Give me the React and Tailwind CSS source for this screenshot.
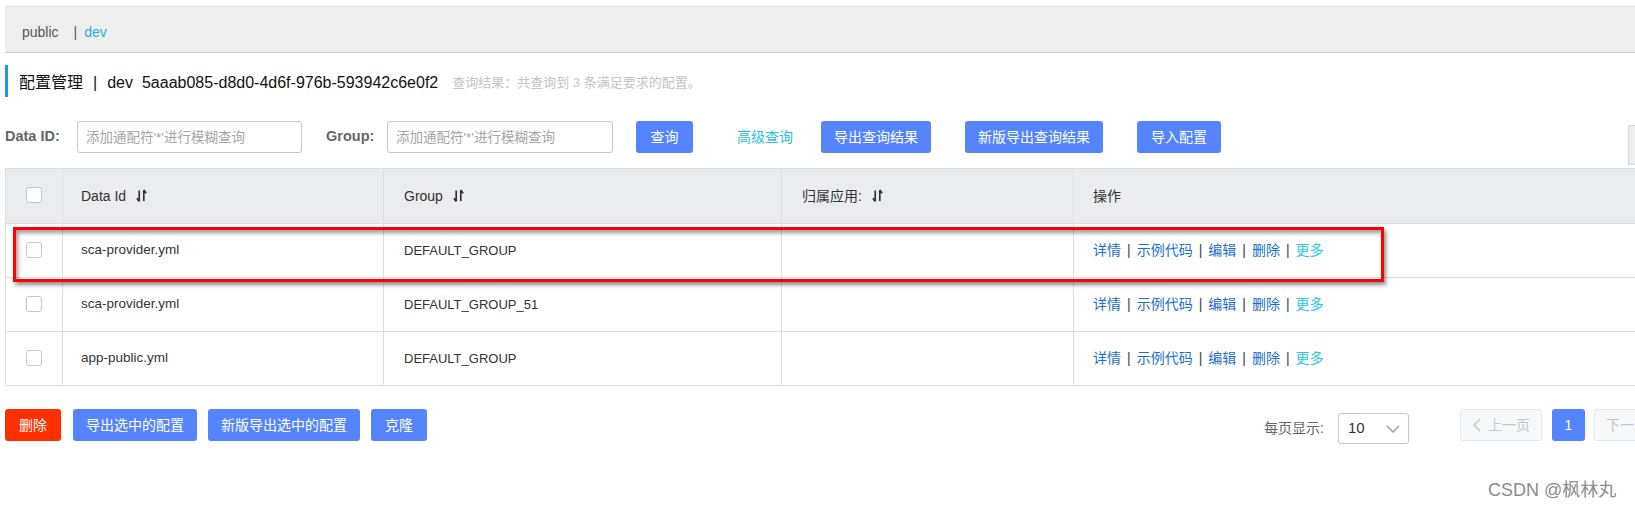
import React from 'react'

const rows = [
  { id: 'sca-provider.yml', group: 'DEFAULT_GROUP' },
  { id: 'sca-provider.yml', group: 'DEFAULT_GROUP_51' },
  { id: 'app-public.yml', group: 'DEFAULT_GROUP' },
]

function SortIcon() {
  return (
    <svg width="11" height="14" viewBox="0 0 11 14" className="ml-[10px] shrink-0" fill="none" stroke="#333" strokeWidth="1.7">
      <path d="M3.2 1.5v11M3.2 12.5L0.9 9.2" />
      <path d="M7.8 1v11M7.8 1l2.3 3.3" />
    </svg>
  )
}

function Checkbox() {
  return <span className="block w-[16px] h-[16px] -mt-[2px] rounded-[3px] border border-[#c4c6cf] bg-white" />
}

function Actions() {
  const sep = <span className="px-[6px] text-[#444]">|</span>
  return (
    <div className="flex items-center text-[14px] text-[#1e6fd0]">
      <span>详情</span>
      {sep}
      <span>示例代码</span>
      {sep}
      <span>编辑</span>
      {sep}
      <span>删除</span>
      {sep}
      <span className="text-[#2fc6e3]">更多</span>
    </div>
  )
}

function Btn({ w, children, red }) {
  return (
    <div
      className={`${w} h-[32px] shrink-0 rounded-[3px] flex items-center justify-center text-[14px] text-white ${
        red ? 'bg-[#ff3000]' : 'bg-[#5584ff]'
      }`}
    >
      {children}
    </div>
  )
}

export default function App() {
  return (
    <div className="relative w-[1635px] h-[511px] overflow-hidden bg-white text-[#333] font-['Liberation_Sans','Noto_Sans_CJK_SC',sans-serif]">
      <div className="w-[1680px] pl-[5px] pt-[5px]">
        {/* namespace bar */}
        <div className="h-[48px] bg-[#eeeeee] border-b border-[#cccccc] flex items-center pt-[7px] pl-[17px] text-[14px]">
          <span className="text-[#555]">public</span>
          <span className="ml-[15px] text-[#555]">|</span>
          <span className="ml-[7px] text-[#1cb4d8]">dev</span>
        </div>

        {/* title */}
        <div className="mt-[12px] h-[32px] border-l-[3px] border-[#1a9bd7] flex items-center pt-[4px] pl-[11px] text-[16px] text-[#111]">
          <span>配置管理</span>
          <span className="mx-[10px]">|</span>
          <span>dev</span>
          <span className="ml-[9px]">5aaab085-d8d0-4d6f-976b-593942c6e0f2</span>
          <span className="ml-[14px] text-[13px] text-[#c4c4c4]">查询结果：共查询到 3 条满足要求的配置。</span>
        </div>

        {/* search row */}
        <div className="mt-[24px] h-[32px] flex items-center">
          <span className="w-[58px] shrink-0 font-bold text-[14.5px] text-[#666]">Data ID:</span>
          <input
            className="ml-[14px] w-[225px] h-[32px] shrink-0 rounded-[3px] border border-[#c4c6cf] px-[8px] text-[13.5px] outline-none placeholder:text-[#a6a6a6]"
            placeholder="添加通配符'*'进行模糊查询"
          />
          <span className="ml-[24px] w-[48px] shrink-0 font-bold text-[14.5px] text-[#666]">Group:</span>
          <input
            className="ml-[13px] w-[226px] h-[32px] shrink-0 rounded-[3px] border border-[#c4c6cf] px-[8px] text-[13.5px] outline-none placeholder:text-[#a6a6a6]"
            placeholder="添加通配符'*'进行模糊查询"
          />
          <div className="ml-[23px]">
            <Btn w="w-[57px]">查询</Btn>
          </div>
          <span className="ml-[44px] text-[14px] text-[#2bbfe0]">高级查询</span>
          <div className="ml-[28px]">
            <Btn w="w-[110px]">导出查询结果</Btn>
          </div>
          <div className="ml-[34px]">
            <Btn w="w-[138px]">新版导出查询结果</Btn>
          </div>
          <div className="ml-[34px]">
            <Btn w="w-[84px]">导入配置</Btn>
          </div>
          <div className="ml-auto self-start mt-[4px] w-[52px] h-[40px] bg-[#eeeeee] border border-[#d9d9d9]" />
        </div>

        {/* table */}
        <div className="mt-[15px] border-t border-l border-[#dcdee3]">
          <div className="grid grid-cols-[57px_321px_398px_292px_1fr] h-[55px] bg-[#ebecf0] text-[14px]">
            <div className="border-r border-b border-[#dcdee3] flex items-center justify-center">
              <Checkbox />
            </div>
            <div className="border-r border-b border-[#dcdee3] flex items-center pl-[18px]">
              Data Id
              <SortIcon />
            </div>
            <div className="border-r border-b border-[#dcdee3] flex items-center pl-[20px]">
              Group
              <SortIcon />
            </div>
            <div className="border-r border-b border-[#dcdee3] flex items-center pl-[20px]">
              归属应用:
              <SortIcon />
            </div>
            <div className="border-b border-[#dcdee3] flex items-center pl-[19px]">操作</div>
          </div>
          {rows.map((r, i) => (
            <div key={i} className="grid grid-cols-[57px_321px_398px_292px_1fr] h-[54px] text-[13.5px]">
              <div className="border-r border-b border-[#dcdee3] flex items-center justify-center">
                <Checkbox />
              </div>
              <div className="border-r border-b border-[#dcdee3] flex items-center pl-[18px]">{r.id}</div>
              <div className="border-r border-b border-[#dcdee3] flex items-center pl-[20px] text-[13px]">{r.group}</div>
              <div className="border-r border-b border-[#dcdee3]" />
              <div className="border-b border-[#dcdee3] flex items-center pl-[19px]">
                <Actions />
              </div>
            </div>
          ))}
        </div>

        {/* bottom bar */}
        <div className="mt-[23px] h-[32px] flex items-center">
          <Btn w="w-[56px]" red>删除</Btn>
          <div className="ml-[12px]">
            <Btn w="w-[124px]">导出选中的配置</Btn>
          </div>
          <div className="ml-[11px]">
            <Btn w="w-[152px]">新版导出选中的配置</Btn>
          </div>
          <div className="ml-[11px]">
            <Btn w="w-[56px]">克隆</Btn>
          </div>

          <div className="ml-auto mr-[4px] flex items-start h-[32px]">
            <div className="flex items-center h-[31px] mt-[4px]">
              <span className="w-[60px] text-[14px] text-[#666]">每页显示:</span>
              <div className="ml-[14px] w-[71px] h-[31px] rounded-[3px] border border-[#c4c6cf] flex items-center pl-[9px] pr-[8px]">
                <span className="text-[15px] text-[#333]">10</span>
                <svg width="14" height="8" viewBox="0 0 14 8" className="ml-auto" fill="none" stroke="#999" strokeWidth="1.3">
                  <path d="M1 1l6 6 6-6" />
                </svg>
              </div>
            </div>
            <div className="ml-[51px] w-[82px] h-[32px] rounded-[3px] border border-[#e6e7eb] bg-[#f7f8fa] flex items-center justify-center text-[14px] text-[#c4c6cf]">
              <svg width="9" height="14" viewBox="0 0 9 14" fill="none" stroke="#c4c6cf" strokeWidth="1.4">
                <path d="M8 1L2 7l6 6" />
              </svg>
              <span className="ml-[7px]">上一页</span>
            </div>
            <div className="ml-[10px] w-[33px] h-[32px] rounded-[3px] bg-[#5584ff] flex items-center justify-center text-[14px] text-white">1</div>
            <div className="ml-[9px] w-[82px] h-[32px] rounded-[3px] border border-[#e6e7eb] bg-[#f7f8fa] flex items-center justify-center text-[14px] text-[#c4c6cf]">
              <span className="mr-[7px]">下一页</span>
              <svg width="9" height="14" viewBox="0 0 9 14" fill="none" stroke="#c4c6cf" strokeWidth="1.4">
                <path d="M1 1l6 6-6 6" />
              </svg>
            </div>
          </div>
        </div>
      </div>

      {/* annotation box */}
      <div className="absolute left-[13px] top-[227px] w-[1371px] h-[55px] border-[3px] border-[#ff0000] shadow-[2px_3px_4px_rgba(0,0,0,0.45),inset_2px_3px_4px_rgba(0,0,0,0.4)]" />

      {/* watermark */}
      <div className="absolute left-[1488px] top-[478px] leading-[24px] text-[18px] text-[#8c8c8c]">CSDN @枫林丸</div>
    </div>
  )
}
